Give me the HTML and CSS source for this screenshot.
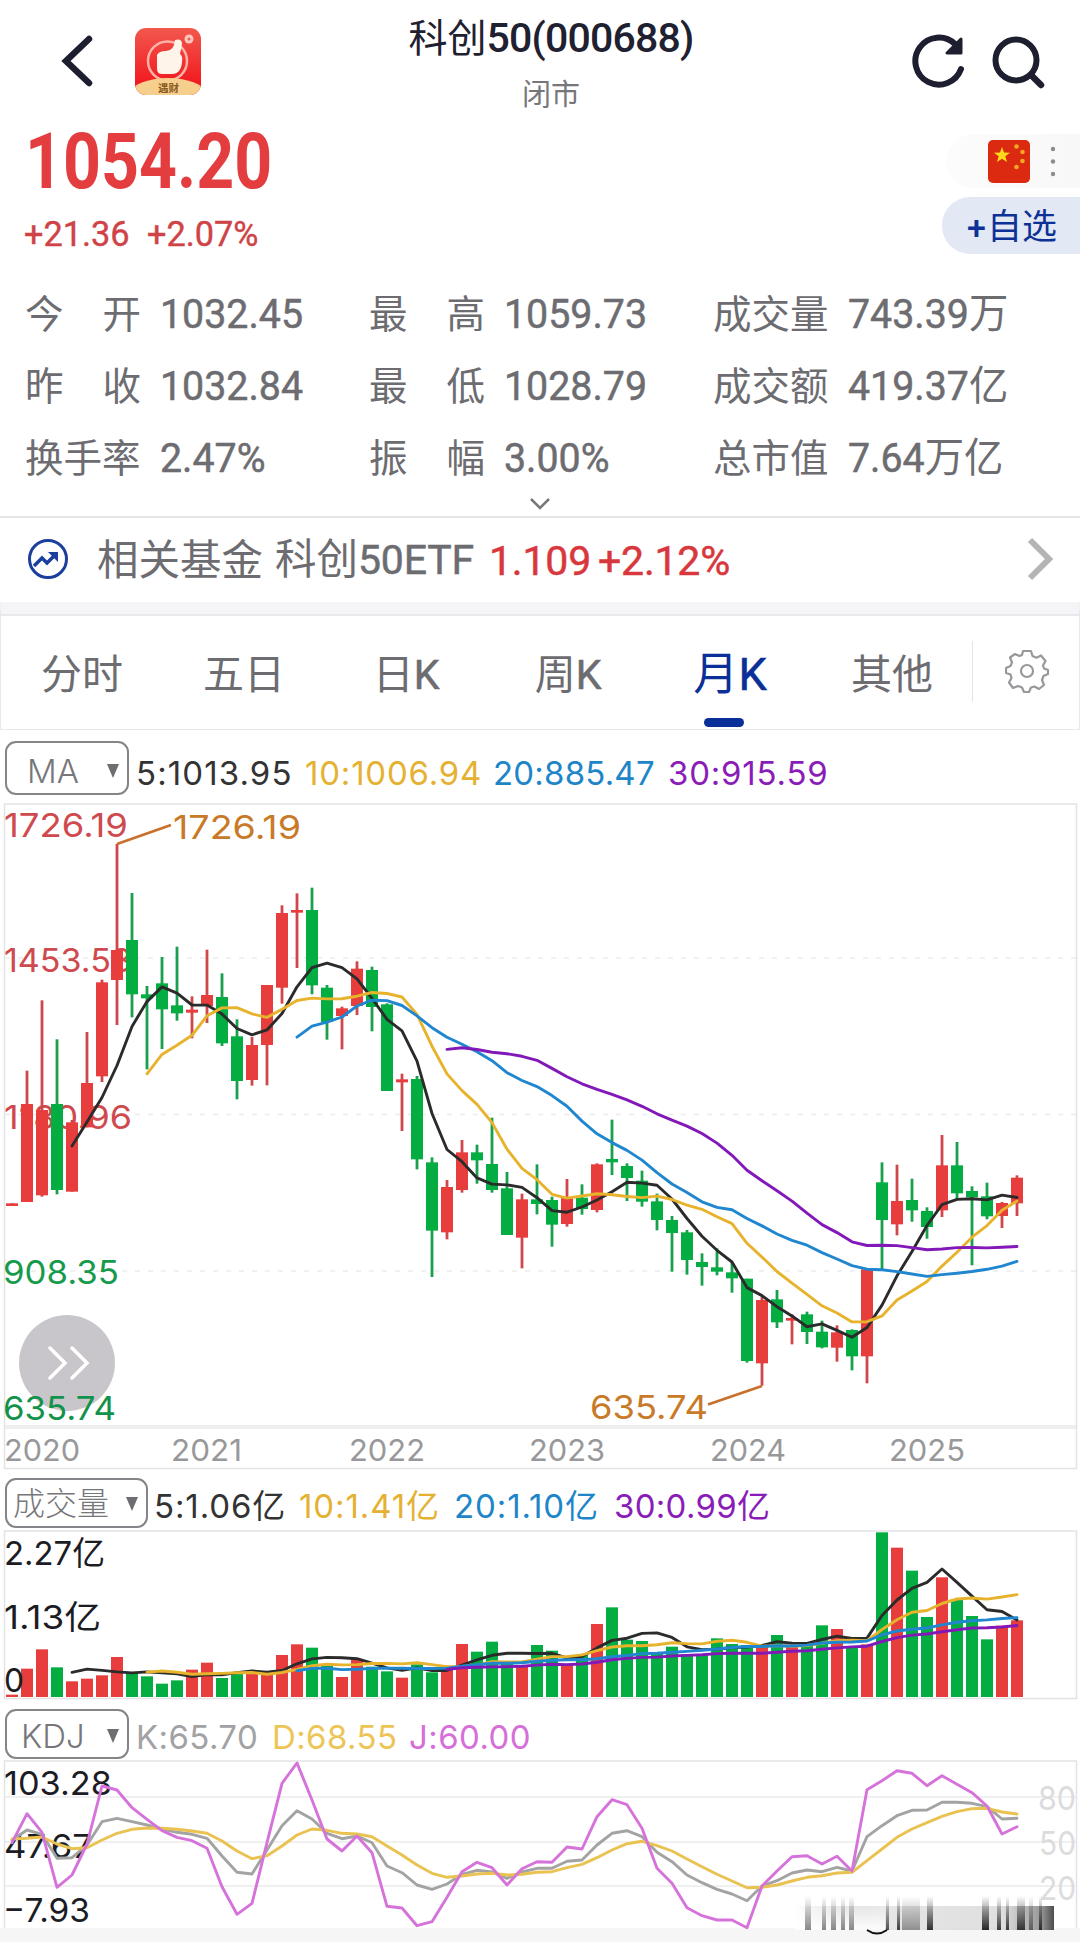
FILE: index.html
```html
<!DOCTYPE html>
<html lang="zh-CN">
<head>
<meta charset="utf-8">
<title>科创50(000688)</title>
<link rel="stylesheet" href="styles.css">
</head>
<body>
<header class="topbar">
  <div class="top-left">
    <svg class="back" width="36" height="56" viewBox="0 0 36 56"><path d="M29 6 6 28l23 22" fill="none" stroke="#1d1f30" stroke-width="6.5" stroke-linecap="round"/></svg>
    <svg class="app" width="68" height="68" viewBox="0 0 68 68">
      <defs>
        <linearGradient id="red" x1="0" y1="0" x2="0" y2="1"><stop offset="0" stop-color="#f2584d"/><stop offset="1" stop-color="#f10c16"/></linearGradient>
        <clipPath id="tile"><rect x="1" y="0" width="66" height="67" rx="11"/></clipPath>
      </defs>
      <g clip-path="url(#tile)">
        <rect width="68" height="68" fill="url(#red)"/>
        <circle cx="33.500" cy="33" r="19.500" fill="none" stroke="#ffb3a8" stroke-width="2.500"/>
        <path d="M23 27q2-4 9-4 8 0 9-11 7-2 7 4l-2 10q3 2 2 8-1 12-10 12H28q-5 0-5-5z" fill="#fff4ea"/>
        <circle cx="55" cy="11" r="4.500" fill="#ffc6bd"/><circle cx="55" cy="11" r="1.500" fill="#f2584d"/>
        <ellipse cx="34" cy="65" rx="37" ry="15" fill="#f6cf8f"/>
      </g>
      <text x="24" y="63.500" font-size="10.500" font-weight="700" fill="#8a5a21">遇财</text>
    </svg>
  </div>
  <div class="title">
    <h1>科创<span class="din">50(000688)</span></h1>
    <p>闭市</p>
  </div>
  <div class="top-right">
    <svg width="54" height="60" viewBox="0 0 54 60"><path d="M49 38A23.500 23.500 0 1 1 43 13" fill="none" stroke="#1d1f30" stroke-width="6" stroke-linecap="round"/><path d="m49 8v14H35z" fill="#1d1f30" stroke="#1d1f30" stroke-width="3" stroke-linejoin="round"/></svg>
    <svg width="56" height="60" viewBox="0 0 56 60"><circle cx="25" cy="29" r="20.500" fill="none" stroke="#1d1f30" stroke-width="6"/><path d="m41 45 9 9" stroke="#1d1f30" stroke-width="6.500" stroke-linecap="round"/></svg>
  </div>
</header>

<section class="quote">
  <div class="price">
    <strong>1054.20</strong>
    <p><span>+21.36</span><span>+2.07%</span></p>
  </div>
  <div class="actions">
    <div class="market">
      <svg width="42" height="43" viewBox="0 0 42 43"><rect width="42" height="43" rx="5" fill="#dc2a10"/><path d="m14 7 2 5.500 6 .2-4.700 3.600 1.700 5.700-5-3.300-5 3.300 1.700-5.700L6 12.700l6-.2z" fill="#ffd91c"/><g fill="#f5a623"><circle cx="28.500" cy="6.500" r="2.300"/><circle cx="34.500" cy="12" r="2.300"/><circle cx="34.500" cy="21" r="2.300"/><circle cx="28.500" cy="27" r="2.300"/></g></svg>
      <svg width="6" height="34" viewBox="0 0 6 34" fill="#8c8c90"><circle cx="3" cy="5" r="2.200"/><circle cx="3" cy="17.500" r="2.200"/><circle cx="3" cy="30" r="2.200"/></svg>
    </div>
    <div class="follow"><b>+</b>自选</div>
  </div>
</section>

<section class="stats">
  <dl><dt>今<i></i>开</dt><dd>1032.45</dd></dl>
  <dl><dt>最<i></i>高</dt><dd>1059.73</dd></dl>
  <dl><dt>成交量</dt><dd>743.39<em>万</em></dd></dl>
  <dl><dt>昨<i></i>收</dt><dd>1032.84</dd></dl>
  <dl><dt>最<i></i>低</dt><dd>1028.79</dd></dl>
  <dl><dt>成交额</dt><dd>419.37<em>亿</em></dd></dl>
  <dl><dt>换手率</dt><dd>2.47%</dd></dl>
  <dl><dt>振<i></i>幅</dt><dd>3.00%</dd></dl>
  <dl><dt>总市值</dt><dd>7.64<em>万亿</em></dd></dl>
</section>
<div class="expand"><svg width="22" height="14" viewBox="0 0 22 14"><path d="m2 2 9 9 9-9" fill="none" stroke="#77777c" stroke-width="2.500"/></svg></div>

<section class="fund">
  <svg class="fund-icon" width="42" height="42" viewBox="0 0 42 42"><circle cx="21" cy="21" r="18.500" fill="none" stroke="#1c3f9e" stroke-width="3"/><path d="m7 28 8-8 5 5 9-9" fill="none" stroke="#1c3f9e" stroke-width="3.500"/><path d="M21 14h10v10z" fill="#1c3f9e"/></svg>
  <span class="fund-label">相关基金</span>
  <span class="fund-name">科创<span class="din">50ETF</span></span>
  <span class="up fund-price">1.109</span>
  <span class="up">+2.12%</span>
  <svg class="more" width="30" height="44" viewBox="0 0 30 44"><path d="M4 3 23 22 4 41" fill="none" stroke="#b4b4b6" stroke-width="6"/></svg>
</section>

<nav class="tabs">
  <div class="tablist"><a>分时</a><a>五日</a><a>日<b>K</b></a><a>周<b>K</b></a><a class="active">月<b>K</b></a><a>其他</a></div>
  <div class="settings"><svg width="44" height="44" viewBox="0 0 44 44" fill="none" stroke="#98989c" stroke-width="2.200" stroke-linejoin="round"><path d="M18 2h8l1.500 5 4 1.700L36 6.500 40.500 12 38 16.500l1 3L43 21v4l-4.500 2-1.500 4 2 5-5 4-4.500-2.500-3.500 1L24 43h-5l-2-4.500-4-1.500-5 2-4-5.500L6.500 29l-1-3.500L1 24v-5l4.500-2L7 13.500 5 8.500 10 5l4.500 2 2.500-1z"/><circle cx="22" cy="22" r="6"/></svg></div>
</nav>

<div class="indicator ma">
  <button>MA<i></i></button>
  <span class="black">5:1013.95</span><span class="gold">10:1006.94</span><span class="blue">20:885.47</span><span class="purple">30:915.59</span>
</div>
<svg id="kline" class="panel" width="1080" height="672" viewBox="0 800 1080 672"></svg>

<div class="indicator vol">
  <button>成交量<i></i></button>
  <span class="black">5:1.06亿</span><span class="gold">10:1.41亿</span><span class="blue">20:1.10亿</span><span class="purple">30:0.99亿</span>
</div>
<svg id="volume" class="panel" width="1080" height="172" viewBox="0 1530 1080 172"></svg>

<div class="indicator kdj">
  <button>KDJ<i></i></button>
  <span class="grey">K:65.70</span><span class="sand">D:68.55</span><span class="pink">J:60.00</span>
</div>
<svg id="kdj" class="panel" width="1080" height="168" viewBox="0 1760 1080 168"></svg>
<footer class="strip"></footer>
<script src="chart.js"></script>
</body>
</html>
```
FILE: styles.css
```css
* { box-sizing: border-box; margin: 0; padding: 0; }
body {
  width: 1080px; height: 1956px; overflow: hidden; background: #fff; color: #6c6c71;
  font-family: Inter, "Noto Sans CJK SC", sans-serif;
}
svg { display: block; flex: none; }
b, em, i { font-style: normal; font-weight: inherit; }
.din { font-family: Roboto, sans-serif; font-weight: 500; }

.topbar { height: 116px; display: grid; grid-template-columns: 360px 1fr 360px; }
.top-left { display: flex; padding: 28px 0 0 60px; gap: 38px; }
.back { margin-top: 5px; }
.top-right { display: flex; padding: 31px 0 0 192px; }
.top-right svg + svg { margin-left: 25px; }
.title { text-align: center; padding-left: 22px; white-space: nowrap; }
.title h1 { font-size: 39px; line-height: 44px; margin-top: 16px; font-weight: 400; color: #1f2030; }
.title .din { font-size: 41px; letter-spacing: -.8px; }
.title p { font-size: 29px; line-height: 34px; margin: 18px 0 0; color: #77777b; }

.quote { height: 166px; display: flex; justify-content: space-between; color: #e43d40; font-family: Roboto, sans-serif; }
.price { padding: 6px 0 0 25px; }
.price strong { display: block; font-size: 77px; line-height: 80px; font-weight: 700; transform: scaleX(.86); transform-origin: 0 0; }
.price p { margin: 13px 0 0 -1px; display: flex; font-size: 35px; line-height: 40px; font-weight: 400; color: #cf4347; -webkit-text-stroke: .4px; }
.price p span { width: 123px; transform: scaleX(.98); transform-origin: 0 0; }
.actions { width: 138px; padding-top: 18px; }
.market { height: 54px; margin-left: 4px; padding-left: 42px; display: flex; align-items: center; gap: 20px; border-radius: 27px 0 0 27px; background: linear-gradient(90deg, #fcfcfd, #f8f8f9); }
.follow { margin-top: 9px; height: 57px; padding-left: 25px; border-radius: 28px 0 0 28px; background: #e3e8f5; color: #0d3194; font: 35px/54px "Noto Sans CJK SC", sans-serif; white-space: nowrap; }
.follow b { font: 500 34px/54px Roboto, sans-serif; margin-right: 1px; }

.stats { display: grid; grid-template-columns: 344px 344px 1fr; grid-auto-rows: 72px; padding: 0 0 0 25px; height: 213px; }
.stats dl { display: flex; align-items: center; padding-bottom: 9px; }
.stats dt { width: 116px; margin-top: -5px; display: flex; justify-content: space-between; font: 38.500px/60px "Noto Sans CJK SC", sans-serif; }
.stats dd { margin-left: 19px; font: 400 41px/60px Roboto, sans-serif; -webkit-text-stroke: .5px; white-space: nowrap; transform: scaleX(.96); transform-origin: 0 50%; }
.stats em { font: 41px/1px "Noto Sans CJK SC", sans-serif; -webkit-text-stroke: 0; }
.expand { height: 23px; display: flex; justify-content: center; padding-top: 2px; border-bottom: 2px solid #e6e6e8; }

.fund { height: 84px; display: flex; align-items: center; padding: 0 24px 0 27px; font-size: 41.500px; line-height: 60px; white-space: nowrap; }
.fund-icon { margin-right: 28px; margin-top: -2px; }
.fund-label { width: 178px; margin-top: -1px; }
.fund-name { width: 214px; margin-top: -2px; }
.fund .din, .up { font-size: 41px; font-weight: 400; -webkit-text-stroke: .5px; line-height: 1px; letter-spacing: -.2px; }
.up { font-family: Roboto, sans-serif; color: #d8383d; }
.fund .up { line-height: 60px; padding-top: 1px; }
.fund-price { width: 109px; }
.more { margin-left: auto; margin-top: -2px; }

.tabs { height: 128px; display: flex; border: 1px solid #e8e8ec; border-top: 12px solid #f5f5f8; box-shadow: inset 0 2px #e9e9ed; }
.tablist { width: 971px; height: 115px; display: grid; grid-template-columns: repeat(6, 162px); grid-template-rows: 115px; }
.tablist a { position: relative; text-align: center; font: 41px/114px "Noto Sans CJK SC", sans-serif; }
.tablist b { font-family: Roboto, sans-serif; font-weight: 400; -webkit-text-stroke: .6px; line-height: 1px; }
.tablist .active { font-size: 45px; color: #0b2f98; }
.active::after { content: ""; position: absolute; left: 55px; bottom: 2px; width: 40px; height: 9px; border-radius: 5px; background: #0b2f98; }
.settings { flex: 1; margin: 27px 0 27px; padding: 8px 0 0 32px; border-left: 1px solid #e3e3e6; }

.indicator { display: grid; align-items: start; font-size: 33px; white-space: nowrap; padding-left: 5px; }
.indicator button { display: flex; align-items: center; justify-content: space-between; border: 2px solid #858589; border-radius: 11px; background: #fff; color: #77777b; font: 300 33px/40px Inter, "Noto Sans CJK SC", sans-serif; }
.indicator button i { border: 6px solid transparent; border-top: 14px solid #6d6d72; border-bottom: 0; }
.ma { height: 70px; padding-top: 11px; grid-template-columns: 131px 169px 188px 175px 1fr; letter-spacing: .8px; }
.ma button { width: 124px; height: 54px; padding: 6px 8px 0 20px; }
.ma span { padding-top: 12px; }
.ma .black { letter-spacing: 1.1px; }
.ma .blue { letter-spacing: .2px; }
.vol { height: 58px; padding-top: 6px; grid-template-columns: 149px 145px 155px 160px 1fr; letter-spacing: .9px; }
.vol button { width: 143px; height: 50px; padding: 2px 8px 0 6px; font-size: 32px; }
.vol span { padding-top: 2px; }
.vol .purple { letter-spacing: .3px; }
.kdj { height: 58px; padding-top: 7px; grid-template-columns: 131px 136px 137px 1fr; letter-spacing: .4px; }
.kdj button { width: 124px; height: 50px; padding: 4px 8px 0 14px; }
.kdj span { padding-top: 8px; }
.black { color: #333; } .gold { color: #e5b132; } .blue { color: #1e86c8; } .purple { color: #8a1cb8; }
.grey { color: #a2a2a4; } .sand { color: #ecc556; } .pink { color: #d66fd8; }

.panel { overflow: visible; }
.panel text { font-family: Inter, "Noto Sans CJK SC", sans-serif; }
.strip { height: 14px; background: #f6f6f7; }
```
FILE: chart.js
```js
const RED = '#e83d3d', GREEN = '#04ad42';
const X = i => 12 + 15 * i;

// each candle: direction, high, body top, body bottom, low (thirds of a canvas unit below the segment's base)
const A = `r 1210 1210 1218 1218|r 812 912 1206 1206|r 601 930 1186 1190|g 718 912 1170 1183|r 960 967 1175 1175|r 696 849 982 982|r 539 547 829 846|r 132 450 540 675|g 279 420 583 652|g 558 583 595 808|g 471 550 628 747|g 440 616 640 662|r 589 629 638 715|r 449 585 618 669|g 520 591 730 738|g 658 709 843 898|r 711 735 840 857|r 555 555 735 856|r 316 339 563 611|r 280 330 338 504|g 263 330 556 583|g 555 563 666 719|r 620 625 648 748`;
const B = `r 304 326 438 465|g 320 330 441 514|g 430 433 693 693|r 641 658 667 813|g 648 657 898 928|g 892 907 1112 1251|r 960 981 1117 1138|r 840 877 990 998|g 854 877 901 971|g 773 912 990 998|g 936 985 1125 1125|r 1001 1018 1133 1225|g 913 1018 1032 1063|g 1010 1020 1094 1160|r 957 1014 1092 1100|g 973 1013 1047 1064|r 910 913 1050 1057|g 779 897 907 945|g 910 918 954 1023|g 932 962 1025 1040|g 1001 1024 1080 1111|g 1068 1080 1119 1235|g 1110 1117 1200 1244`;
const C = `g 520 546 561 617|g 505 562 575 586|g 547 577 595 638|g 596 596 843 848|r 650 660 850 917|g 630 658 727 744|r 703 714 722 793|g 695 703 756 792|g 722 755 802 805|r 736 757 803 845|g 748 750 829 871|r 568 568 829 910|g 247 307 420 568|r 254 363 433 466|g 296 360 391 425|g 382 393 441 476|r 165 256 391 411|g 186 256 340 357|g 319 333 352 556|g 308 349 409 418|r 366 369 408 444|r 286 293 370 408`;
const parse = (text, base) => text.split('|').map(row => {
  const [dir, ...v] = row.split(' ');
  return [dir, ...v.map(n => base + n / 3)];
});
const candles = [...parse(A, 800), ...parse(B, 860), ...parse(C, 1080)];

const volTops = [674,596,538,592,634,626,616,561,607,619,641,631,599,578,624,607,607,615,555,523,533,585,621,568,590,604,623,583,607,590,522,545,515,578,590,525,542,585,555,462,412,509,513,547,530,553,552,505,522,525,527,495,530,525,466,477,530,523,187,233,302,441,322,388,438,508,467,451].map(v => 1470 + v / 3);

const J = [428,341,397,562,525,432,258,270,323,358,392,412,422,445,560,643,610,428,250,189,300,417,453,408,458,619,624,677,665,592,515,487,503,555,506,485,487,441,447,350,299,314,385,505,550,623,647,660,660,683,558,513,470,467,492,469,513,269,242,212,220,257,227,253,278,318,402,380];
const K = [420,390,403,475,473,435,365,355,365,375,387,397,403,415,468,517,522,450,377,332,357,400,416,408,428,498,518,555,568,552,523,511,516,535,516,505,505,484,480,435,400,392,410,457,485,525,548,568,582,602,558,542,519,510,515,502,513,410,377,347,331,330,307,307,310,320,357,355];
const D = [417,415,411,432,446,443,420,400,388,384,385,388,393,400,423,453,476,467,438,405,387,391,400,402,410,438,465,495,520,532,528,522,520,525,523,517,515,503,493,473,450,431,424,437,453,477,500,523,543,563,562,555,543,532,527,519,517,482,447,412,387,368,349,335,326,325,336,342];

const average = (values, n) => values.map((_, i) =>
  i < n - 1 ? null : values.slice(i - n + 1, i + 1).reduce((a, b) => a + b) / n);
const line = (values, color, width = 2.9) => {
  const pts = values.map((v, i) => v === null ? '' : `${X(i)},${v.toFixed(1)}`).filter(Boolean).join(' ');
  return `<polyline points="${pts}" fill="none" stroke="${color}" stroke-width="${width}" stroke-linejoin="round" stroke-linecap="round"/>`;
};
const label = (text, x, y, w, color, size = 33) =>
  `<text x="${x}" y="${y}" textLength="${w}" lengthAdjust="spacingAndGlyphs" fill="${color}" style="font-size:${size}px">${text}</text>`;
const rule = (y, extra = '') => `<path d="M5 ${y}H1076" stroke="#ebebed" stroke-width="1.6" ${extra}/>`;
const frame = (top, bottom) => `<rect x="4.5" y="${top}" width="1072" height="${bottom - top}" fill="none" stroke="#e3e3e6" stroke-width="1.5"/>`;
const maLines = values => [[5, '#2b2b2b'], [10, '#e8b32c'], [20, '#1f86cf'], [30, '#8318b8']]
  .map(([n, c]) => line(average(values, n), c)).join('');

const dash = 'stroke-dasharray="5 8"';
const closes = candles.map(c => c[0] === 'r' ? c[2] : c[3]);
document.getElementById('kline').innerHTML =
  frame(804, 1468.5) + rule(958, dash) + rule(1114.5, dash) + rule(1271, dash) +
  '<path d="M5 1427H1076" stroke="#eeeef0" stroke-width="4"/>' +
  '<circle cx="67" cy="1363" r="48" fill="#c8c6ca"/><path d="m50 1348 15 15-15 15m22-30 15 15-15 15" fill="none" stroke="#fff" stroke-width="3.5" stroke-linecap="round"/>' +
  label('1726.19', 4, 837, 124, '#cf4a4e') + label('1453.58', 4, 972, 128, '#cf4a4e') + label('1180.96', 4, 1128.5, 128, '#cf4a4e') +
  label('908.35', 3, 1284, 116, '#169a4c') + label('635.74', 3, 1419.5, 113, '#12924a') +
  candles.map(([d, hi, top, bot, lo], i) => {
    const c = d === 'r' ? RED : GREEN;
    return `<path d="M${X(i)} ${hi}V${lo}" stroke="${d === 'r' ? '#cf474b' : '#18a04c'}" stroke-width="2.8"/><rect x="${X(i) - 6}" y="${top}" width="12" height="${Math.max(bot - top, 2.6)}" fill="${c}"/>`;
  }).join('') + maLines(closes) +
  '<path d="m117 844 54-19M708 1404.5l54-18.500" stroke="#c8702c" stroke-width="2.800"/>' +
  label('1726.19', 173, 839, 128, '#c97a28') + label('635.74', 590, 1419, 118, '#c97a28') +
  [['2020', 4], ['2021', 171], ['2022', 349], ['2023', 529], ['2024', 710], ['2025', 889]]
    .map(([t, x]) => label(t, x, 1461, t === '2021' ? 71 : 76, '#98989a', 30)).join('');

document.getElementById('volume').innerHTML =
  frame(1531, 1698.5) +
  volTops.map((y, i) => `<rect x="${X(i) - 6}" y="${y}" width="12" height="${1697 - y}" fill="${candles[i][0] === 'r' ? RED : GREEN}"/>`).join('') +
  maLines(volTops) +
  label('2.27亿', 4, 1565, 101, '#1c1c24') + label('1.13亿', 4, 1628.5, 97, '#1c1c24') + label('0', 4, 1692, 20, '#1c1c24');

const thirds = s => s.map(v => 1700 + v / 3);
const smear = [[805, 6, .5], [822, 4, .5], [831, 5, .5], [841, 4, .5], [849, 5, .5], [886, 3, .7], [897, 3, .8], [902, 18, .4], [927, 6, .85], [982, 7, .9], [997, 4, .8], [1006, 3, .8], [1017, 8, .8], [1029, 4, .5], [1039, 3, .8]];
document.getElementById('kdj').innerHTML =
  '<defs><linearGradient id="fade" x1="0" x2="0" y1="0" y2="1"><stop offset="0" stop-color="#111" stop-opacity="0"/><stop offset="1" stop-color="#111"/></linearGradient>' +
  '<linearGradient id="side"><stop offset="0" stop-color="#999" stop-opacity="0"/><stop offset=".35" stop-color="#ddd"/><stop offset=".8" stop-color="#d5d5d5"/><stop offset=".95" stop-color="#777"/><stop offset="1" stop-color="#111"/></linearGradient>' +
  '<linearGradient id="veil" x1="0" x2="0" y1="0" y2="1"><stop offset="0" stop-color="#fff" stop-opacity="0"/><stop offset="1" stop-color="#fff" stop-opacity=".9"/></linearGradient></defs>' +
  frame(1761, 1929) + '<rect x="0" y="1928" width="1080" height="14" fill="#f6f6f7"/>' + rule(1797) + rule(1842) + rule(1886) +
  label('80', 1038, 1810, 38, '#dcdcde') + label('50', 1039, 1855, 37, '#dcdcde') + label('20', 1039, 1900, 37, '#dcdcde') +
  label('103.28', 4, 1795, 108, '#1c1c24') + label('47.67', 4, 1858, 88, '#1c1c24') + label('−7.93', 3, 1922, 87, '#1c1c24') +
  line(thirds(K), '#a3a3a3') + line(thirds(D), '#e9c251') + line(thirds(J), '#d573da') +
  '<rect x="795" y="1906" width="259" height="24" fill="url(#side)" opacity=".75"/><rect x="795" y="1902" width="90" height="28" fill="url(#veil)"/>' +
  smear.map(([x, w, o]) => `<rect x="${x}" y="1896" width="${w}" height="34" fill="url(#fade)" opacity="${o}"/>`).join('') +
  '<path d="M867 1930q10 7 20 0" fill="none" stroke="#111" stroke-width="2"/>';
```
